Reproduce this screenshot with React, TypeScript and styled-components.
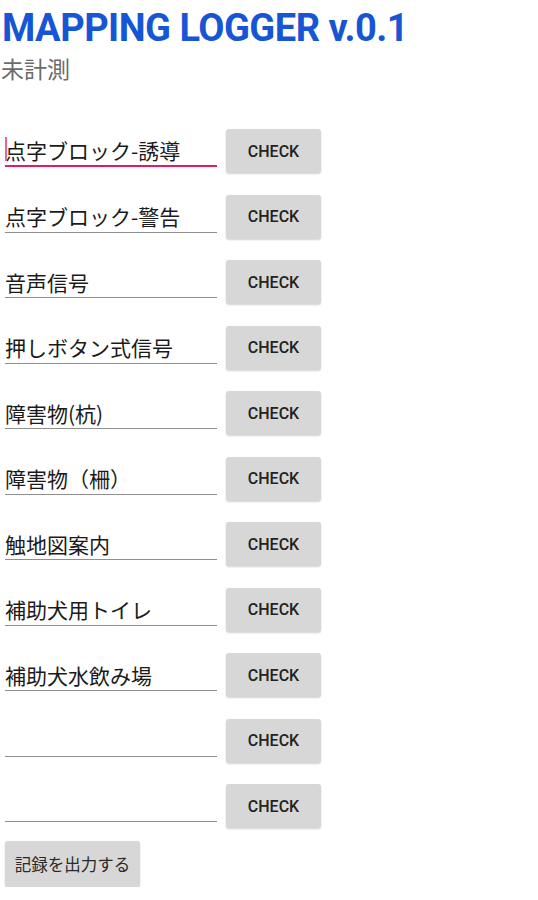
import React from 'react';
import styled, { createGlobalStyle } from 'styled-components';

const items = [
    '点字ブロック-誘導',
    '点字ブロック-警告',
    '音声信号',
    '押しボタン式信号',
    '障害物(杭)',
    '障害物（柵）',
    '触地図案内',
    '補助犬用トイレ',
    '補助犬水飲み場',
    '',
    '',
];

const GlobalStyle = createGlobalStyle`
  body {
    margin: 0;
    background: #ffffff;
    font-family: Roboto, "Noto Sans CJK JP", sans-serif;
  }
`;

const App = () => {
    return (
        <Page>
            <GlobalStyle />
            <Title>MAPPING LOGGER v.0.1</Title>
            <Status>未計測</Status>
            <List>
                {items.map((name, i) => (
                    <Row key={i}>
                        <Field focused={i === 0}>
                            {i === 0 && <Caret />}
                            <TextInput readOnly value={name} />
                        </Field>
                        <CheckButton>CHECK</CheckButton>
                    </Row>
                ))}
            </List>
            <ExportButton>記録を出力する</ExportButton>
        </Page>
    );
};

const Page = styled.div`
  display: flex;
  flex-direction: column;
  align-items: flex-start;
  padding: 5px 0 0 5px;
`;

const Title = styled.h1`
  margin: 0 0 0 -3px;
  font-family: Roboto, sans-serif;
  font-weight: 700;
  font-size: 38px;
  line-height: 46px;
  color: #1655d4;
  letter-spacing: -0.5px;
`;

const Status = styled.div`
  margin: 1px 0 0 -4px;
  font-family: "Noto Sans CJK JP", sans-serif;
  font-size: 23px;
  line-height: 32px;
  color: #6b6b6b;
`;

const List = styled.div`
  display: flex;
  flex-direction: column;
  gap: 21.5px;
  margin-top: 45px;
`;

const Row = styled.div`
  display: flex;
  align-items: flex-start;
  gap: 9px;
`;

const Field = styled.div<{ focused?: boolean }>`
  position: relative;
  box-sizing: border-box;
  width: 212px;
  height: 38px;
  border-bottom: ${({ focused }) => (focused ? '2px solid #e5196b' : '1.5px solid #8f8f8f')};
`;

const Caret = styled.span`
  position: absolute;
  left: 0;
  top: 8px;
  width: 2px;
  height: 24px;
  background: #f06292;
`;

const TextInput = styled.input`
  box-sizing: border-box;
  width: 100%;
  height: 100%;
  padding: 6px 0 0 0;
  border: none;
  outline: none;
  background: transparent;
  font-family: "Noto Sans CJK JP", sans-serif;
  font-size: 21px;
  color: #1a1a1a;
`;

const CheckButton = styled.button`
  width: 95px;
  height: 44px;
  border: none;
  border-radius: 3px;
  background: #d7d7d7;
  box-shadow: 0 1px 2px rgba(0, 0, 0, 0.18);
  font-family: Roboto, sans-serif;
  font-weight: 500;
  font-size: 16px;
  color: #222222;
  padding: 0;
`;

const ExportButton = styled.button`
  margin-top: 13px;
  width: 135px;
  height: 46px;
  border: none;
  border-radius: 3px;
  background: #d7d7d7;
  box-shadow: 0 1px 2px rgba(0, 0, 0, 0.18);
  font-family: "Noto Sans CJK JP", sans-serif;
  font-size: 16.5px;
  color: #2a2a2a;
  padding: 0;
`;

export default App;
